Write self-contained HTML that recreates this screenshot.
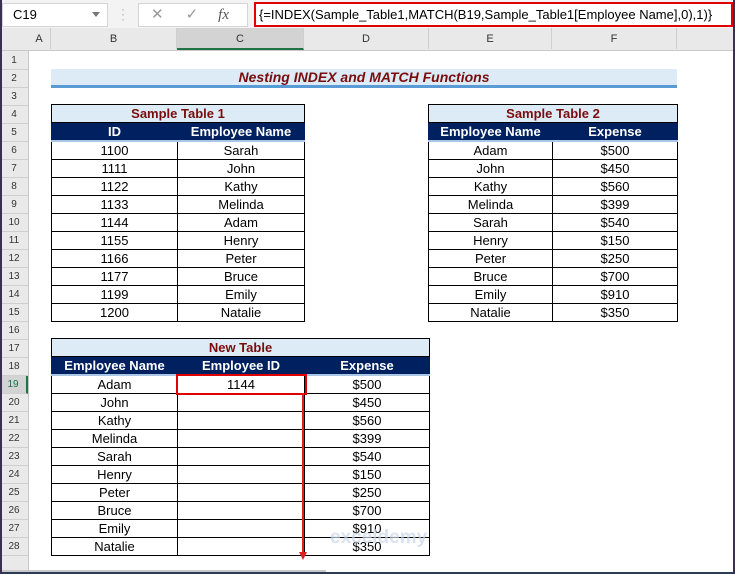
<!DOCTYPE html>
<html><head><style>
body{margin:0;width:735px;height:574px;overflow:hidden;background:#fff;font-family:"Liberation Sans",sans-serif;position:relative}
.a{position:absolute}
table{border-collapse:collapse;position:absolute;table-layout:fixed;font-size:13px}
td{height:17px;padding:0;text-align:center;border:1px solid #000;line-height:16px;white-space:nowrap;overflow:hidden}
.t td{background:#ddebf7;color:#7b0c0c;font-weight:bold}
.h td{background:#002060;color:#fff;font-weight:bold;border-left-color:#002060;border-right-color:#002060;border-bottom:2px solid #a9c6e6;height:17px}
.rh{position:absolute;left:0;width:28px;height:17px;border-bottom:1px solid #cfcfcf;font-size:10px;text-align:center;line-height:18px;color:#333;background:#e9e9e9}
.ch{position:absolute;top:28px;height:21px;border-right:1px solid #cfcfcf;font-size:11px;text-align:center;line-height:22px;color:#333;background:#e9e9e9}
</style></head><body>
<div class="a" style="left:0;top:0;width:735px;height:28px;background:#f3f3f3;border-bottom:1px solid #d0d0d0"></div>
<div class="a" style="left:2px;top:3px;width:104px;height:22px;background:#fff;border:1px solid #d5d5d5;font-size:13px;line-height:22px;text-indent:10px">C19</div>
<div class="a" style="left:92px;top:12px;width:0;height:0;border-left:4px solid transparent;border-right:4px solid transparent;border-top:5px solid #777"></div>
<div class="a" style="left:121px;top:7px;color:#aaa;font-size:12px;line-height:5px">·<br>·<br>·</div>
<div class="a" style="left:138px;top:3px;width:108px;height:22px;background:#fff;border:1px solid #d5d5d5;color:#999;font-size:15px;line-height:22px"><span style="margin-left:12px">✕</span><span style="margin-left:22px">✓</span><span style="margin-left:20px;font-style:italic;font-family:'Liberation Serif';color:#555">fx</span></div>
<div class="a" style="left:254px;top:2px;width:475px;height:21px;background:#fff;border:2px solid #e00000;font-size:13px;line-height:21px;text-indent:3px;white-space:nowrap;overflow:hidden">{=INDEX(Sample_Table1,MATCH(B19,Sample_Table1[Employee Name],0),1)}</div>
<div class="a" style="left:0;top:28px;width:735px;height:22px;background:#e9e9e9;border-bottom:1px solid #c8c8c8"></div>
<div class="ch" style="left:0;width:28px"></div>
<div class="ch" style="left:28px;width:22px">A</div>
<div class="ch" style="left:51px;width:125px">B</div>
<div class="ch" style="left:177px;width:126px;background:#d3d3d3;border-bottom:2px solid #217346;height:20px">C</div>
<div class="ch" style="left:304px;width:124px">D</div>
<div class="ch" style="left:429px;width:122px">E</div>
<div class="ch" style="left:552px;width:124px">F</div>
<div class="a" style="left:0;top:51px;width:28px;height:523px;background:#e9e9e9;border-right:1px solid #c8c8c8"></div>
<div class="rh" style="top:52px">1</div><div class="rh" style="top:70px">2</div><div class="rh" style="top:88px">3</div><div class="rh" style="top:106px">4</div><div class="rh" style="top:124px">5</div><div class="rh" style="top:142px">6</div><div class="rh" style="top:160px">7</div><div class="rh" style="top:178px">8</div><div class="rh" style="top:196px">9</div><div class="rh" style="top:214px">10</div><div class="rh" style="top:232px">11</div><div class="rh" style="top:250px">12</div><div class="rh" style="top:268px">13</div><div class="rh" style="top:286px">14</div><div class="rh" style="top:304px">15</div><div class="rh" style="top:322px">16</div><div class="rh" style="top:340px">17</div><div class="rh" style="top:358px">18</div><div class="rh" style="top:376px;background:#d3d3d3;color:#217346;border-right:2px solid #217346;width:26px">19</div><div class="rh" style="top:394px">20</div><div class="rh" style="top:412px">21</div><div class="rh" style="top:430px">22</div><div class="rh" style="top:448px">23</div><div class="rh" style="top:466px">24</div><div class="rh" style="top:484px">25</div><div class="rh" style="top:502px">26</div><div class="rh" style="top:520px">27</div><div class="rh" style="top:538px">28</div>
<div class="a" style="left:51px;top:69px;width:626px;height:16px;background:#ddebf7;border-bottom:3px solid #5b9bd5;color:#7b0c0c;font-weight:bold;font-style:italic;font-size:14px;text-align:center;line-height:17px">Nesting INDEX and MATCH Functions</div>

<table style="left:51px;top:104px;width:253px">
<col style="width:126px"><col style="width:127px">
<tr class="t"><td colspan="2">Sample Table 1</td></tr>
<tr class="h"><td>ID</td><td>Employee Name</td></tr>
<tr><td>1100</td><td>Sarah</td></tr><tr><td>1111</td><td>John</td></tr><tr><td>1122</td><td>Kathy</td></tr><tr><td>1133</td><td>Melinda</td></tr><tr><td>1144</td><td>Adam</td></tr><tr><td>1155</td><td>Henry</td></tr><tr><td>1166</td><td>Peter</td></tr><tr><td>1177</td><td>Bruce</td></tr><tr><td>1199</td><td>Emily</td></tr><tr><td>1200</td><td>Natalie</td></tr>
</table>
<table style="left:428px;top:104px;width:249px">
<col style="width:124px"><col style="width:125px">
<tr class="t"><td colspan="2">Sample Table 2</td></tr>
<tr class="h"><td>Employee Name</td><td>Expense</td></tr>
<tr><td>Adam</td><td>$500</td></tr><tr><td>John</td><td>$450</td></tr><tr><td>Kathy</td><td>$560</td></tr><tr><td>Melinda</td><td>$399</td></tr><tr><td>Sarah</td><td>$540</td></tr><tr><td>Henry</td><td>$150</td></tr><tr><td>Peter</td><td>$250</td></tr><tr><td>Bruce</td><td>$700</td></tr><tr><td>Emily</td><td>$910</td></tr><tr><td>Natalie</td><td>$350</td></tr>
</table>
<table style="left:51px;top:338px;width:378px">
<col style="width:126px"><col style="width:127px"><col style="width:125px">
<tr class="t"><td colspan="3">New Table</td></tr>
<tr class="h"><td>Employee Name</td><td>Employee ID</td><td>Expense</td></tr>
<tr><td>Adam</td><td>1144</td><td>$500</td></tr><tr><td>John</td><td></td><td>$450</td></tr><tr><td>Kathy</td><td></td><td>$560</td></tr><tr><td>Melinda</td><td></td><td>$399</td></tr><tr><td>Sarah</td><td></td><td>$540</td></tr><tr><td>Henry</td><td></td><td>$150</td></tr><tr><td>Peter</td><td></td><td>$250</td></tr><tr><td>Bruce</td><td></td><td>$700</td></tr><tr><td>Emily</td><td></td><td>$910</td></tr><tr><td>Natalie</td><td></td><td>$350</td></tr>
</table>
<div class="a" style="left:176px;top:374px;width:127px;height:17px;border:2px solid #e00000"></div>
<div class="a" style="left:302px;top:393px;width:2px;height:160px;background:#e02020"></div>
<div class="a" style="left:299px;top:552px;width:0;height:0;border-left:4px solid transparent;border-right:4px solid transparent;border-top:8px solid #e02020"></div>
<div class="a" style="left:330px;top:527px;color:#c9d6ea;font-weight:bold;font-size:19px;opacity:.7">exceldemy</div>
<div class="a" style="left:0;top:570px;width:326px;height:4px;background:#c8c8c8"></div>
<div class="a" style="left:0;top:572px;width:735px;height:2px;background:#2b3a55"></div>
<div class="a" style="left:0;top:0;width:2px;height:574px;background:#3a3050"></div>
<div class="a" style="right:0;top:0;width:2px;height:574px;background:#3a3050"></div>
</body></html>
